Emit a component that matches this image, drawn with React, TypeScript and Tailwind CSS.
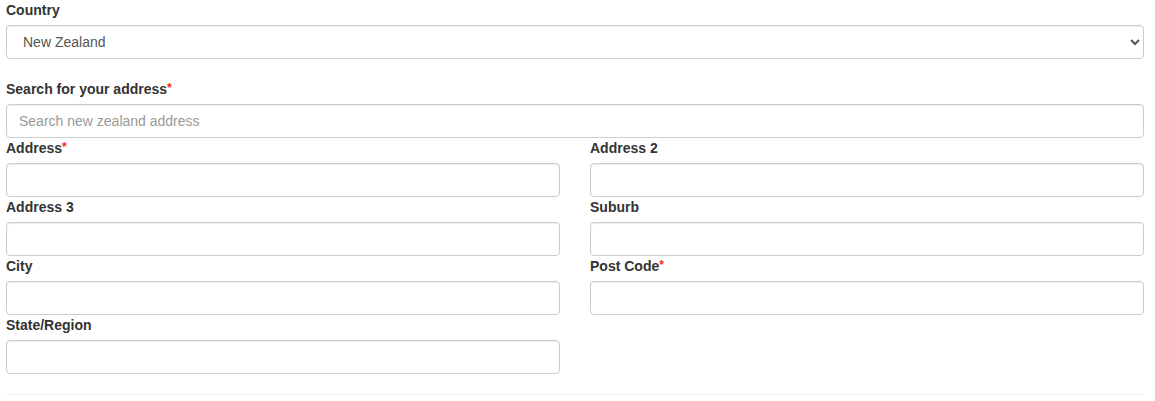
import React from "react";

const inputCls =
  "block h-[34px] w-full rounded-[4px] border border-[#ccc] bg-white px-3 text-[14px] text-[#555] shadow-[inset_0_1px_1px_rgba(0,0,0,0.075)] outline-none placeholder:text-[#999]";

function Label({ text, required }: { text: string; required?: boolean }) {
  return (
    <label className="mb-[5px] block h-5 text-[14px] font-bold leading-5 text-[#333]">
      {text}
      {required && (
        <span className="align-top text-[12px] leading-[18px] text-[#f22]">*</span>
      )}
    </label>
  );
}

function Field({ label, required }: { label: string; required?: boolean }) {
  return (
    <div>
      <Label text={label} required={required} />
      <input type="text" className={inputCls} />
    </div>
  );
}

export default function App() {
  return (
    <div
      className="w-[1155px] bg-white pl-[6px] pr-[11px]"
      style={{ fontFamily: '"Liberation Sans", Arial, sans-serif' }}
    >
      <div className="mb-5">
        <Label text="Country" />
        <select className={inputCls} defaultValue="nz">
          <option value="nz">New Zealand</option>
          <option value="au">Australia</option>
        </select>
      </div>
      <div>
        <Label text="Search for your address" required />
        <input
          type="text"
          className={inputCls}
          placeholder="Search new zealand address"
        />
      </div>
      <div className="grid grid-cols-2 gap-x-[30px]">
        <Field label="Address" required />
        <Field label="Address 2" />
        <Field label="Address 3" />
        <Field label="Suburb" />
        <Field label="City" />
        <Field label="Post Code" required />
        <Field label="State/Region" />
      </div>
      <hr className="mt-5 border-0 border-t border-[#eee]" />
      <div className="h-[6px]" />
    </div>
  );
}
